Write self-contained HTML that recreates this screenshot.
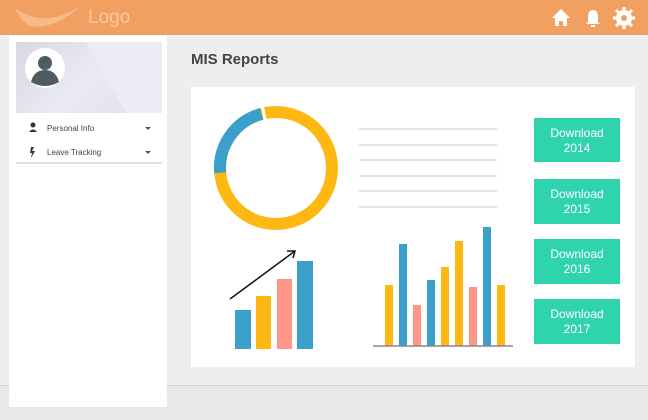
<!DOCTYPE html>
<html><head><style>
body{margin:0;width:648px;height:419px;background:#eeeeee;font-family:"Liberation Sans",sans-serif;position:relative;overflow:hidden}
.hdr{position:absolute;left:0;top:0;width:648px;height:35px;background:#f2a062}
.logo{position:absolute;left:88px;top:7px;color:#f8c9a0;font-size:19px;font-family:"Liberation Sans Narrow","Liberation Sans",sans-serif}
.side{position:absolute;left:9px;top:35px;width:158px;height:372px;background:#fff}
.prof{position:absolute;left:16px;top:42px;width:146px;height:71px;background:linear-gradient(135deg,#d8d8e4,#eaeaf2 50%,#e0e0ea)}
.mi{position:absolute;left:47px;font-size:8px;color:#444}
.card{position:absolute;left:191px;top:87px;width:444px;height:280px;background:#fff}
.btn{position:absolute;left:534px;width:86px;background:#2fd4ad;color:#fff;font-size:12px;text-align:center;line-height:15px;padding-top:8px;box-sizing:border-box;font-family:"Liberation Sans Narrow","Liberation Sans",sans-serif}
.ln{position:absolute;left:359px;width:138px;height:2px;background:#e8e6dc}
.bot{position:absolute;left:0;top:385px;width:648px;height:34px;background:#e8e8e8;border-top:1px solid #d0d0d0}
</style></head><body>
<div class="bot"></div>
<div class="hdr">
<svg width="90" height="35" style="position:absolute;left:10px;top:0"><path d="M5 8 Q35 30 72 5 Q45 30 20 26 Q10 20 5 8Z" fill="#f6bb8a"/></svg>
<div class="logo">Logo</div>
<svg width="90" height="35" style="position:absolute;left:548px;top:0">
<path d="M13 9 L4 18 H7 V26 H11 V21 H15 V26 H19 V18 H22Z" fill="#fff"/>
<path d="M45 10 Q40 10 40 17 V22 L38 24 H52 L50 22 V17 Q50 10 45 10Z M43 25 H47 V27 H43Z" fill="#fff"/>
<circle cx="76" cy="18" r="6" fill="none" stroke="#fff" stroke-width="4"/>
<g stroke="#fff" stroke-width="3"><line x1="76" y1="7" x2="76" y2="29"/><line x1="65" y1="18" x2="87" y2="18"/><line x1="68" y1="10" x2="84" y2="26"/><line x1="84" y1="10" x2="68" y2="26"/></g>
<circle cx="76" cy="18" r="3" fill="#f2a062"/>
</svg>
</div>
<div class="side"></div>
<div class="prof"><svg width="146" height="71"><polygon points="70,0 146,0 146,71 110,71" fill="#ececf4"/><circle cx="29" cy="26" r="20" fill="#fff"/><circle cx="29" cy="21" r="7" fill="#4e5b61"/><path d="M15 40 Q18 28 29 28 Q40 28 43 40 Q29 48 15 40Z" fill="#4e5b61"/></svg></div>
<svg width="14" height="40" style="position:absolute;left:27px;top:121px"><circle cx="6" cy="4" r="2.5" fill="#333"/><path d="M2 11 Q6 6 10 11Z" fill="#333"/><path d="M4 26 L7 26 L5 30 L8 30 L4 37 L5 32 L3 32Z" fill="#333"/></svg>
<div class="mi" style="top:124px">Personal Info</div>
<div class="mi" style="top:148px">Leave Tracking</div>
<div style="position:absolute;left:145px;top:127px;border:3px solid transparent;border-top:3px solid #555"></div>
<div style="position:absolute;left:145px;top:151px;border:3px solid transparent;border-top:3px solid #555"></div>
<div style="position:absolute;left:16px;top:162px;width:146px;height:2px;background:#e0e0e0"></div>
<div style="position:absolute;left:191px;top:51px;font-size:15px;color:#444;font-weight:bold">MIS Reports</div>
<div class="card"></div>
<svg width="648" height="419" style="position:absolute;left:0;top:0">
<circle cx="276" cy="168" r="56" fill="none" stroke="#fdb813" stroke-width="12"/>
<path d="M261.5 113.9 A56 56 0 0 0 220.2 172.9" fill="none" stroke="#3b9fcb" stroke-width="12"/>
<line x1="262" y1="104" x2="266" y2="124" stroke="#fff" stroke-width="3"/>
<g fill="#3b9fcb"><rect x="235" y="310" width="16" height="39"/><rect x="297" y="261" width="16" height="88"/>
<rect x="399" y="244" width="8" height="102"/><rect x="427" y="280" width="8" height="66"/><rect x="483" y="227" width="8" height="119"/></g>
<g fill="#fdb813"><rect x="256" y="296" width="15" height="53"/><rect x="385" y="285" width="8" height="61"/><rect x="441" y="267" width="8" height="79"/><rect x="455" y="241" width="8" height="105"/><rect x="497" y="285" width="8" height="61"/></g>
<g fill="#ff9488"><rect x="277" y="279" width="15" height="70"/><rect x="413" y="305" width="8" height="41"/><rect x="469" y="287" width="8" height="59"/></g>
<line x1="373" y1="346" x2="513" y2="346" stroke="#888" stroke-width="1.5"/>
<path d="M230 299 L295 251 M287 251 H295 L293 258" fill="none" stroke="#111" stroke-width="1.5"/>
</svg>
<div class="ln" style="top:128px"></div><div class="ln" style="top:144px"></div><div class="ln" style="top:159px"></div><div class="ln" style="top:175px"></div><div class="ln" style="top:190px"></div><div class="ln" style="top:206px"></div>
<div class="btn" style="top:118px;height:44px">Download<br>2014</div>
<div class="btn" style="top:179px;height:45px">Download<br>2015</div>
<div class="btn" style="top:239px;height:45px">Download<br>2016</div>
<div class="btn" style="top:299px;height:45px">Download<br>2017</div>
</body></html>
